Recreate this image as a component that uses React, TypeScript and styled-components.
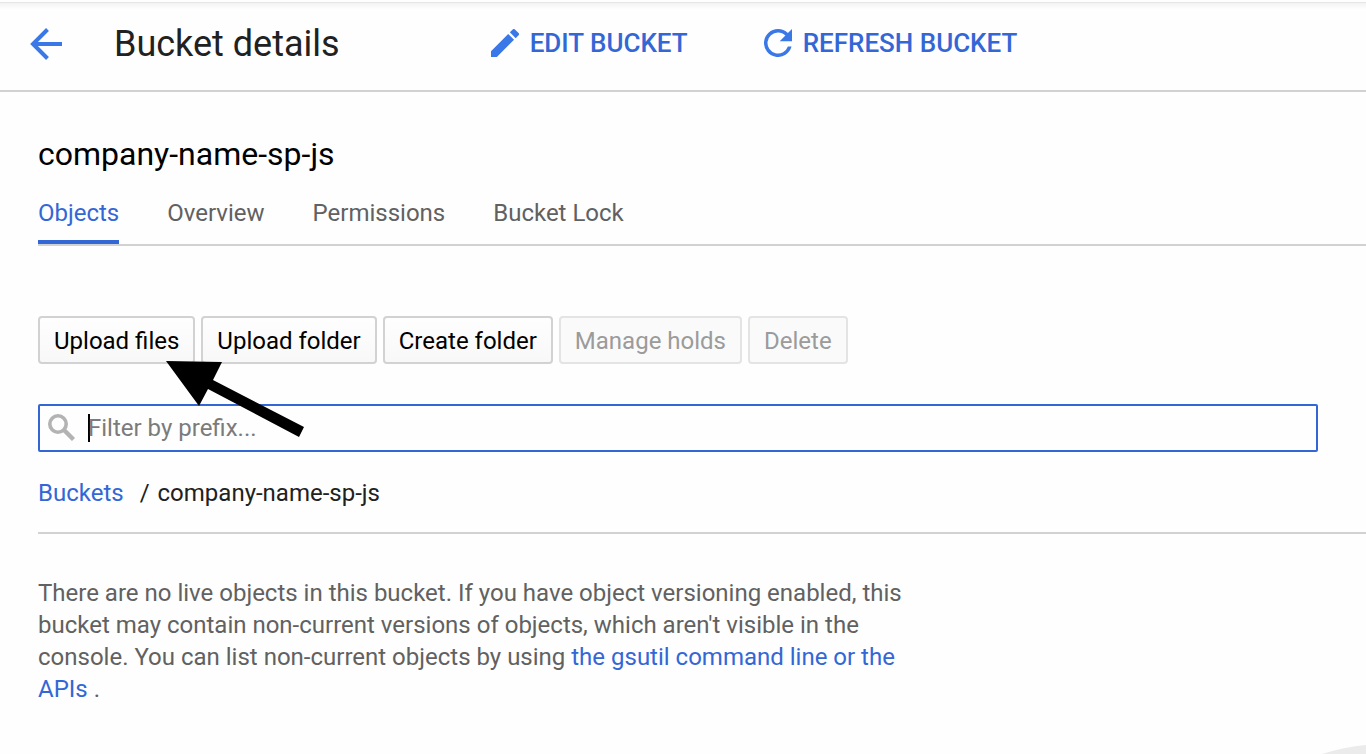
import React from 'react';
import styled, { createGlobalStyle, css } from 'styled-components';

const GlobalStyle = createGlobalStyle`
  *, *::before, *::after { box-sizing: border-box; }
  html { overflow: hidden; }
  body {
    margin: 0;
    background: #fefefe;
    color: #212121;
    font: 400 24px/32px Roboto, sans-serif;
  }
`;

const Header = styled.header`
  display: flex;
  align-items: center;
  height: 92px;
  padding: 0 30px 2px;
  border-bottom: 2px solid #d2d2d2;
  background: linear-gradient(#fefefe 2px, #e6e6e6 2px, #e6e6e6 3px, #f2f2f2 3px, #fefefe 9px);
`;

const IconButton = styled.button`
  display: flex;
  padding: 0;
  border: 0;
  background: none;
  color: #3b78e7;
  cursor: pointer;
`;

const Title = styled.h1`
  margin: 0 151px 0 52px;
  font-size: 36px;
  line-height: 44px;
  font-weight: 400;
`;

const HeaderAction = styled.button`
  display: flex;
  align-items: center;
  gap: 11px;
  margin-right: 76px;
  padding: 0 0 2px;
  border: 0;
  background: none;
  color: #3367d6;
  font: 500 26px/32px Roboto, sans-serif;
  white-space: nowrap;
  cursor: pointer;
  svg { fill: #3b78e7; }
`;

const Main = styled.main`
  padding: 42px 0 0 38px;
`;

const BucketName = styled.h2`
  margin: 0;
  color: #000;
  font-size: 32px;
  line-height: 40px;
  font-weight: 400;
`;

const Tabs = styled.nav`
  display: flex;
  gap: 48px;
  height: 72px;
  padding-top: 23px;
  border-bottom: 2px solid #d2d2d2;
`;

const Tab = styled.a<{ $active?: boolean }>`
  height: 47px;
  color: #616161;
  text-decoration: none;
  ${({ $active }) => $active && css`
    border-bottom: 4px solid #3367d6;
    color: #3367d6;
  `}
`;

const Toolbar = styled.div`
  position: relative;
  display: flex;
  gap: 6px;
  margin-top: 70px;
`;

const ToolButton = styled.button`
  height: 48px;
  padding: 2px 14px 0;
  border: 2px solid #d2d2d2;
  border-radius: 4px;
  background: linear-gradient(#fefefe, #f8f8f8);
  color: #000;
  font: 400 24px/32px Roboto, sans-serif;
  white-space: nowrap;
  &:disabled {
    border-color: #e4e4e4;
    background: #fafafa;
    color: #9b9b9b;
  }
`;

const Pointer = styled.svg`
  position: absolute;
  top: 44px;
  left: 126px;
  z-index: 1;
  pointer-events: none;
`;

const FilterBox = styled.label`
  display: flex;
  align-items: center;
  height: 48px;
  margin: 40px 48px 0 0;
  padding-left: 6px;
  border: 2px solid #3367d6;
  border-radius: 2px;
`;

const Caret = styled.span`
  width: 2px;
  height: 28px;
  margin: 0 -2px 0 10px;
  background: #000;
`;

const FilterInput = styled.input`
  flex: 1;
  min-width: 0;
  padding: 0;
  border: 0;
  outline: 0;
  background: none;
  color: #212121;
  font: inherit;
  &::placeholder { color: #7b7b7b; opacity: 1; }
`;

const Link = styled.a`
  color: #3367d6;
  text-decoration: none;
`;

const Breadcrumb = styled.nav`
  display: flex;
  gap: 8px;
  height: 82px;
  padding-top: 25px;
  border-bottom: 2px solid #d2d2d2;
  ${Link} { margin-right: 8px; }
`;

const EmptyMessage = styled.p`
  max-width: 880px;
  margin: 43px 0 0;
  color: #616161;
`;

const CornerShape = styled.svg`
  position: fixed;
  right: 0;
  bottom: 0;
`;

const tabs = ['Objects', 'Overview', 'Permissions', 'Bucket Lock'];

const tools = [
  { label: 'Upload files' },
  { label: 'Upload folder' },
  { label: 'Create folder' },
  { label: 'Manage holds', disabled: true },
  { label: 'Delete', disabled: true },
];

export default function App() {
  return (
    <>
      <GlobalStyle />
      <Header>
        <IconButton aria-label="Back">
          <svg width="32" height="32" viewBox="0 0 32 32" fill="none" stroke="currentColor" strokeWidth="4">
            <path d="M32 16H4M17.5 1.5L3 16l14.5 14.5" />
          </svg>
        </IconButton>
        <Title>Bucket details</Title>
        <HeaderAction>
          <svg width="28" height="28" viewBox="3 3 18 18">
            <path d="M3 17.25V21h3.75L17.81 9.94l-3.75-3.75L3 17.25zM20.71 7.04a1 1 0 0 0 0-1.41l-2.34-2.34a1 1 0 0 0-1.41 0l-1.83 1.83 3.75 3.75 1.83-1.83z" />
          </svg>
          EDIT BUCKET
        </HeaderAction>
        <HeaderAction>
          <svg width="28" height="28" viewBox="4 4 16 16">
            <path d="M17.65 6.35A7.96 7.96 0 0 0 12 4a8 8 0 1 0 7.73 10h-2.08A6 6 0 1 1 12 6c1.66 0 3.14.69 4.22 1.78L13 11h7V4l-2.35 2.35z" />
          </svg>
          REFRESH BUCKET
        </HeaderAction>
      </Header>
      <Main>
        <BucketName>company-name-sp-js</BucketName>
        <Tabs>
          {tabs.map((name, i) => (
            <Tab key={name} href="#" $active={i === 0}>{name}</Tab>
          ))}
        </Tabs>
        <Toolbar>
          {tools.map(({ label, disabled }) => (
            <ToolButton key={label} disabled={disabled}>{label}</ToolButton>
          ))}
          <Pointer width="142" height="80" viewBox="164 360 142 80" aria-hidden="true">
            <path d="M166 361L222 362 213 380 304 427 299 437 208 389 199 406Z" />
          </Pointer>
        </Toolbar>
        <FilterBox>
          <svg width="32" height="32" viewBox="0 0 32 32" fill="none" stroke="#b3b3b3">
            <circle cx="12" cy="12" r="8.2" strokeWidth="3.6" />
            <path d="M17.5 17.5L27.5 27.5" strokeWidth="4.4" />
          </svg>
          <Caret />
          <FilterInput type="text" aria-label="Filter by prefix" placeholder="Filter by prefix..." />
        </FilterBox>
        <Breadcrumb>
          <Link href="#">Buckets</Link>
          <span>/</span>
          <span>company-name-sp-js</span>
        </Breadcrumb>
        <EmptyMessage>
          There are no live objects in this bucket. If you have object versioning enabled, this
          bucket may contain non-current versions of objects, which aren't visible in the
          console. You can list non-current objects by using{' '}
          <Link href="#">the gsutil command line or the APIs</Link> .
        </EmptyMessage>
      </Main>
      <CornerShape width="44" height="10" viewBox="0 0 44 10" fill="#ebebeb" aria-hidden="true">
        <path d="M0 10Q22 3 44 1V10Z" />
      </CornerShape>
    </>
  );
}
